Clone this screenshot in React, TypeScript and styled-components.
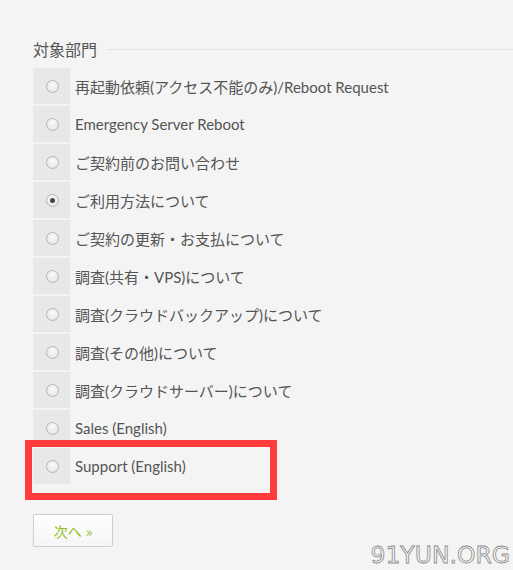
import React from "react";
import styled, { createGlobalStyle } from "styled-components";

const Global = createGlobalStyle`
  html, body { margin: 0; padding: 0; background: #f4f4f4; }
  body { font-family: "Lato", "Noto Sans CJK JP", sans-serif; }
`;

const Page = styled.div`
  position: relative;
  width: 513px;
  height: 570px;
  overflow: hidden;
  background: #f4f4f4;
  padding: 38px 0 0 33px;
  box-sizing: border-box;
`;

const LegendRow = styled.div`
  display: flex;
  align-items: center;
  gap: 9px;
  height: 22px;
`;

const LegendText = styled.span`
  font-family: "Noto Sans CJK JP", sans-serif;
  font-size: 16px;
  color: #555;
  line-height: 22px;
`;

const Rule = styled.div`
  flex: 1;
  height: 1px;
  background: #e3e3e3;
`;

const List = styled.div`
  display: flex;
  flex-direction: column;
  gap: 2px;
  margin-top: 8px;
`;

const Row = styled.label`
  display: flex;
  align-items: center;
  height: 36px;
`;

const RadioCell = styled.div`
  width: 37px;
  height: 36px;
  background: #e8e8e8;
  display: flex;
  align-items: center;
  justify-content: center;
  flex-shrink: 0;
`;

const Radio = styled.span<{ $checked?: boolean }>`
  width: 11px;
  height: 11px;
  border-radius: 50%;
  border: 1px solid #b5b5b5;
  background: radial-gradient(circle at 50% 35%, #fafafa 0%, #e2e2e2 100%);
  box-sizing: content-box;
  position: relative;
  margin-left: 1px;
  &::after {
    content: "";
    display: ${(p) => (p.$checked ? "block" : "none")};
    position: absolute;
    left: 3px;
    top: 3px;
    width: 5px;
    height: 5px;
    border-radius: 50%;
    background: #444;
  }
`;

const Label = styled.span`
  font-family: "Lato", "Noto Sans CJK JP", sans-serif;
  font-size: 15px;
  color: #555;
  margin-left: 5px;
  white-space: nowrap;
`;

const Button = styled.button`
  margin-top: 30px;
  width: 80px;
  height: 33px;
  border: 1px solid #cfcfcf;
  border-radius: 2px;
  background: linear-gradient(#ffffff, #f5f5f5);
  color: #8cc021;
  font-family: "Noto Sans CJK JP", sans-serif;
  font-size: 14px;
  display: flex;
  align-items: center;
  justify-content: center;
  gap: 4px;
  padding: 0;
`;

const Highlight = styled.div`
  position: absolute;
  left: 25px;
  top: 440px;
  width: 252px;
  height: 60px;
  border: 7px solid #ff3b3b;
  box-sizing: border-box;
  pointer-events: none;
`;

const Watermark = styled.div`
  position: absolute;
  right: 3px;
  bottom: 1px;
  font-family: "DejaVu Sans", sans-serif;
  font-size: 23.5px;
  color: #f6f6f6;
  -webkit-text-stroke: 0.8px #8a8a8a;
`;

const options = [
  "再起動依頼(アクセス不能のみ)/Reboot Request",
  "Emergency Server Reboot",
  "ご契約前のお問い合わせ",
  "ご利用方法について",
  "ご契約の更新・お支払について",
  "調査(共有・VPS)について",
  "調査(クラウドバックアップ)について",
  "調査(その他)について",
  "調査(クラウドサーバー)について",
  "Sales (English)",
  "Support (English)",
];

export default function App() {
  return (
    <>
      <Global />
      <Page>
        <LegendRow>
          <LegendText>対象部門</LegendText>
          <Rule />
        </LegendRow>
        <List>
          {options.map((o, i) => (
            <Row key={o}>
              <RadioCell>
                <Radio $checked={i === 3} />
              </RadioCell>
              <Label>{o}</Label>
            </Row>
          ))}
        </List>
        <Button>
          <span>次へ</span>
          <span>»</span>
        </Button>
        <Highlight />
        <Watermark>91YUN.ORG</Watermark>
      </Page>
    </>
  );
}
